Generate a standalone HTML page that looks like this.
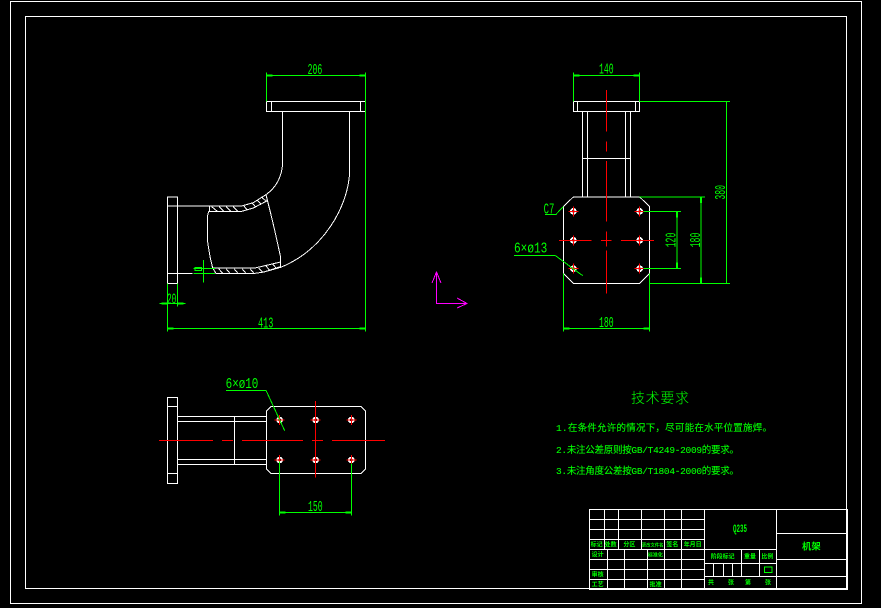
<!DOCTYPE html>
<html><head><meta charset="utf-8">
<style>
html,body{margin:0;padding:0;background:#000;width:881px;height:608px;overflow:hidden}
svg{display:block;shape-rendering:crispEdges}
.w{fill:none;stroke:#fff;stroke-width:3}
.g{fill:none;stroke:#0f0;stroke-width:3}
.gt{fill:none;stroke:#0f0;stroke-width:6}
.r{fill:none;stroke:#f00;stroke-width:3}
.d{fill:#0f0;font-family:"Liberation Mono",monospace;font-size:45px;text-anchor:middle}
.c{fill:#0f0;font-family:"Liberation Mono","Noto Sans CJK SC",monospace}
.b{stroke:#0f0;stroke-width:.12px}
</style></head><body>
<svg width="881" height="608" viewBox="0 0 881 608" xmlns="http://www.w3.org/2000/svg">
<rect width="881" height="608" fill="#000"/>
<rect x="10.500" y="1.500" width="851" height="602" fill="none" stroke="#fff"/>
<rect x="25.500" y="16.500" width="821" height="572" fill="none" stroke="#fff"/>

<!-- front view -->
<g transform="translate(140,50) scale(.33333)">
<path class="w" d="M380 154H676V185H380ZM395 154V185M661 154V185M428 185V340C425 385 405 415 378 434M629 185V365C625 470 550 600 422 652"/>
<path class="w" d="M82 441H113V700H82ZM82 468H208M82 670H158M113 670H82"/>
<path class="w" d="M208 468H305L340 458L378 434L382 452L340 474L305 484H208ZM206 484L202 500V570L210 620L218 654L228 670H345L372 666L422 650V622L405 545L392 490L378 434M218 654H345L422 636V652L372 666"/>
<path class="w" d="M215 470L232 484M238 470L252 484M258 470L272 484M280 470L294 484M310 466L322 480M335 458L348 472M352 450L364 464M365 442L377 452M236 656L248 670M258 656L270 670M282 656L294 670M306 656L318 670M330 656L342 670M356 654L368 666M378 648L390 662M398 642L410 656"/>
<path class="g" d="M380 68V154M676 68V845M82 700V845M113 700V770M380 77H676M82 836H676M58 761H137M190 630V698M160 656H225M160 671H225M165 652H184V662H165Z"/>
<path class="gt" d="M380 77H398M658 77H676M82 836H100M658 836H676M64 761H82M113 761H131"/>
<text class="d" x="525" y="72" textLength="44" lengthAdjust="spacingAndGlyphs">206</text>
<text class="d" x="377" y="832" textLength="46" lengthAdjust="spacingAndGlyphs">413</text>
<text class="d" x="95" y="760" textLength="28" lengthAdjust="spacingAndGlyphs">20</text>
</g>

<!-- side view -->
<g transform="translate(500,50) scale(.33333)">
<defs>
<g id="h"><circle r="10" fill="#fff"/><circle r="4" fill="#000"/><path class="r" d="M-15 0H15M0 -15V15"/></g>
</defs>
<path class="w" d="M220 154H419V185H220ZM233 154V185M406 154V185M247 185V441M263 185V441M376 185V441M392 185V441M247 325H392"/>
<path class="w" d="M220 441H419L449 470V670L419 700H220L190 670V470Z"/>
<use href="#h" x="220" y="484"/><use href="#h" x="419" y="484"/>
<use href="#h" x="220" y="571"/><use href="#h" x="419" y="571"/>
<use href="#h" x="220" y="656"/><use href="#h" x="419" y="656"/>
<path class="r" d="M319 120V245M319 275V305M319 333V515M319 545V590M319 602V730M177 571H275M303 571H335M363 571H462"/>
<path class="g" d="M220 68V154M419 68V154M220 77H419M419 154H690M449 700H690M680 154V700M419 441H615M603 441V700M430 484H543M430 655H543M531 484V655M190 670V845M449 670V845M190 836H449M135 493H168L190 470M42 616H165L248 677"/>
<path class="gt" d="M220 77H238M401 77H419M603 441V459M603 682V700M531 484V502M531 637V655M190 836H208M431 836H449"/>
<text class="d" x="319" y="70" textLength="44" lengthAdjust="spacingAndGlyphs">140</text>
<text class="d" x="319" y="831" textLength="44" lengthAdjust="spacingAndGlyphs">180</text>
<text class="d" x="147" y="490" textLength="32" lengthAdjust="spacingAndGlyphs">C7</text>
<text class="d" x="92" y="608" textLength="100" lengthAdjust="spacingAndGlyphs">6×ø13</text>
<text class="d" transform="translate(675,427) rotate(-90)" textLength="44" lengthAdjust="spacingAndGlyphs">380</text>
<text class="d" transform="translate(600,570) rotate(-90)" textLength="44" lengthAdjust="spacingAndGlyphs">180</text>
<text class="d" transform="translate(527,570) rotate(-90)" textLength="44" lengthAdjust="spacingAndGlyphs">120</text>
</g>

<!-- bottom view -->
<g transform="translate(140,365) scale(.33333)">
<path class="w" d="M82 97H113V356H82ZM82 124H113M82 325H113M113 154H378M113 170H378M113 283H378M113 298H378M283 154V298"/>
<path class="w" d="M393 124H663L677 138V312L663 326H393L379 312V138Z"/>
<use href="#h" x="419" y="165"/><use href="#h" x="527" y="165"/><use href="#h" x="634" y="165"/>
<use href="#h" x="419" y="285"/><use href="#h" x="527" y="285"/><use href="#h" x="634" y="285"/>
<path class="r" d="M57 226H219M246 226H279M306 226H489M516 226H549M576 226H735M527 108V338"/>
<path class="g" d="M418 290V452M634 295V452M418 442H634M258 76H378L434 197"/>
<path class="gt" d="M418 442H436M616 442H634"/>
<text class="d" x="526" y="438" textLength="44" lengthAdjust="spacingAndGlyphs">150</text>
<text class="d" x="306" y="69" textLength="98" lengthAdjust="spacingAndGlyphs">6×ø10</text>
</g>

<!-- UCS -->
<path d="M436.500 304V272M432 283L436.500 272L441 283M436.500 303.500H467M457 298L467 303.500L457 308" fill="none" stroke="#f0f"/>

<!-- notes -->
<g class="c">
<text x="631" y="403" font-size="14" font-weight="300" textLength="58">技术要求</text>
<text class="b" x="556" y="431" font-size="9.500" textLength="216">1.在条件允许的情况下，尽可能在水平位置施焊。</text>
<text class="b" x="556" y="453" font-size="9.500" textLength="183">2.未注公差原则按GB/T4249-2009的要求。</text>
<text class="b" x="556" y="474" font-size="9.500" textLength="183">3.未注角度公差按GB/T1804-2000的要求。</text>
</g>

<!-- title block -->
<g transform="translate(585,505) scale(.33333)">
<path class="w" d="M13 13H787V253H13ZM358 13V253M574 13V253"/>
<path class="w" d="M13 43H358M13 73H358M13 103H358M13 133H574M13 163H358M13 193H358M13 223H358"/>
<path class="w" d="M58 13V133M100 13V133M169 13V133M238 13V253M289 13V253M67 133V253M118 133V253M187 133V253"/>
<path class="w" d="M358 175H574M358 214H574M469 133V214M523 133V214M385 175V214M415 175V214M442 175V214"/>
<path class="w" d="M574 85H787M574 163H787M574 214H787"/>
<rect class="g" x="538" y="186" width="23" height="17"/>
<g class="c" font-size="18" text-anchor="middle" font-weight="700">
<text x="35" y="125">标记</text><text x="77" y="125">处数</text><text x="133" y="125">分区</text>
<text x="203" y="125" font-size="13">更改文件名</text><text x="262" y="125">签名</text><text x="323" y="125">年月日</text>
<text x="38" y="155">设计</text><text x="211" y="155" font-size="15">标准化</text>
<text x="38" y="215">审核</text><text x="38" y="244">工艺</text><text x="212" y="244">批准</text>
<text x="413" y="161">阶段标记</text><text x="495" y="160">重量</text><text x="547" y="160">比例</text>
<text x="378" y="239">共</text><text x="438" y="239">张</text><text x="489" y="239">第</text><text x="549" y="239">张</text>
<text x="465" y="81" textLength="42" lengthAdjust="spacingAndGlyphs" font-size="32">Q235</text>
<text x="679" y="134" font-size="28">机架</text>
</g>
</g>
</svg>
</body></html>
